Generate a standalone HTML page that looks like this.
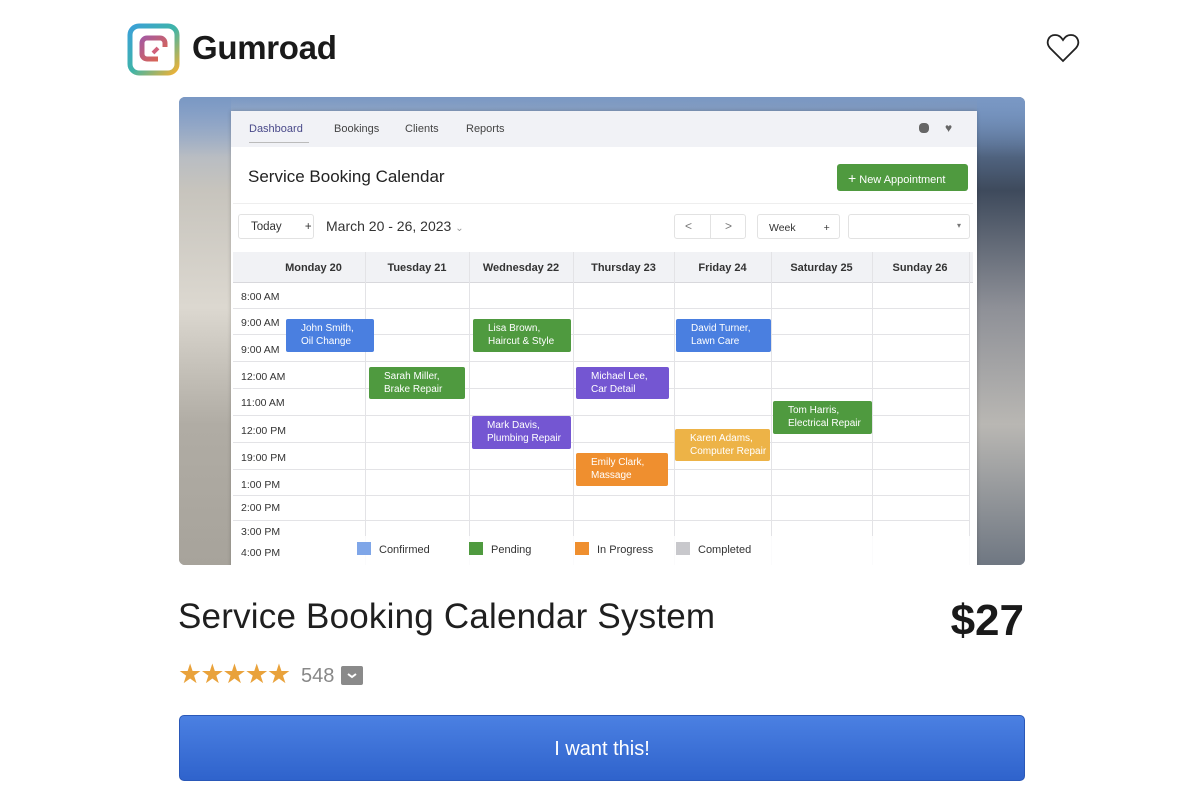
<!DOCTYPE html>
<html><head><meta charset="utf-8"><style>
*{margin:0;padding:0;box-sizing:border-box}
body{width:1200px;height:800px;background:#fff;font-family:"Liberation Sans",sans-serif;position:relative;overflow:hidden}
.abs{position:absolute}
.hero{left:179px;top:97px;width:846px;height:468px;border-radius:6px;overflow:hidden;
background:linear-gradient(90deg,#8d8f93 0%,#c5c2bd 3%,#d6d3cd 6%,#7f8a9a 100%);}
.hero .bgt{left:0;top:0;width:846px;height:60px;background:linear-gradient(180deg,#7a98c4,rgba(160,170,190,0))}
.hero .bgr{left:798px;top:0;width:48px;height:468px;background:linear-gradient(180deg,#6f8fbd 0%,#3e4a5c 20%,#8e9097 45%,#b9b7b3 70%,#6f7782 100%)}
.hero .bgl{left:0;top:0;width:52px;height:468px;background:linear-gradient(180deg,#9fb0cc 0%,#c7c4bd 20%,#dcd8d0 45%,#b0aca4 70%,#a7a39b 100%)}
.app{left:52px;top:14px;width:746px;height:460px;background:#fff;box-shadow:0 0 4px rgba(0,0,0,.2)}
.nav{left:0;top:0;width:746px;height:36px;background:#f1f2f6;font-size:11px;color:#444}
.nav span{position:absolute;top:12px}
.t{font-size:12px;color:#333}
.ev{position:absolute;color:#fff;font-size:10px;line-height:12.5px;padding:4px 0 0 15px;border-radius:2px}
.hl{position:absolute;left:2px;width:736px;height:1px;background:#e3e3e6}
.vl{position:absolute;top:141px;width:1px;height:320px;background:#e3e3e6}
.tm{position:absolute;left:10px;font-size:10.5px;color:#333}
.dh{position:absolute;top:151px;font-size:11px;font-weight:bold;color:#333;text-align:center}
.lg{position:absolute;top:431px;font-size:11px;color:#333}
.lg i{display:inline-block;width:14px;height:13px;vertical-align:-2px;margin-right:8px}
</style></head><body>
<svg class="abs" style="left:127px;top:23px" width="53" height="53" viewBox="0 0 53 53">
<defs><linearGradient id="g1" x1="0" y1="0" x2="1" y2="1"><stop offset="0" stop-color="#3aa0d8"/><stop offset=".5" stop-color="#3fb4a8"/><stop offset="1" stop-color="#f2b233"/></linearGradient>
<linearGradient id="g2" x1="0" y1="0" x2="1" y2="1"><stop offset="0" stop-color="#a55aa0"/><stop offset="1" stop-color="#e0664a"/></linearGradient></defs>
<rect x="3" y="3" width="47" height="47" rx="9" fill="none" stroke="url(#g1)" stroke-width="5"/>
<path d="M31 36 H20 a5 5 0 0 1 -5 -5 V20 a5 5 0 0 1 5 -5 H33 a5 5 0 0 1 5 5 V24" fill="none" stroke="url(#g2)" stroke-width="5"/>
<path d="M26 30 l5 -5" stroke="#d0607a" stroke-width="4"/>
</svg>
<div class="abs" style="left:192px;top:29px;font-size:33px;font-weight:bold;color:#1a1a1a;letter-spacing:-.3px">Gumroad</div>
<svg class="abs" style="left:1046px;top:33px" width="34" height="30" viewBox="0 0 34 30"><path d="M17 28 L4 15 C-1 9 3 2 9 2 C13 2 15 4 17 7 C19 4 21 2 25 2 C31 2 35 9 30 15 Z" fill="none" stroke="#222" stroke-width="1.8"/></svg>

<div class="abs hero">
<div class="abs bgl"></div><div class="abs bgr"></div><div class="abs bgt"></div>
<div class="abs app">
 <div class="abs nav"><span style="left:18px;color:#4a4a8a">Dashboard</span><span style="left:103px">Bookings</span><span style="left:174px">Clients</span><span style="left:235px">Reports</span>
 <div class="abs" style="left:18px;top:31px;width:60px;height:1px;background:#bbb"></div>
 <div class="abs" style="left:688px;top:12px;width:10px;height:10px;border-radius:4px;background:#666"></div>
 <div class="abs" style="left:714px;top:10px;font-size:12px;color:#666">♥</div></div>
 <div class="abs" style="left:17px;top:56px;font-size:17px;color:#222">Service Booking Calendar</div>
 <div class="abs" style="left:2px;top:92px;width:740px;height:1px;background:#eee"></div>
 <div class="abs" style="left:606px;top:53px;width:131px;height:27px;background:#4f9a3f;border-radius:3px;color:#fff;font-size:11px;padding:6px 0 0 11px"><b style="font-size:14px;font-weight:normal">+</b> New Appointment</div>
 <div class="abs t" style="left:7px;top:103px;width:76px;height:25px;border:1px solid #e2e2e2;border-radius:3px;padding:6px 0 0 12px;font-size:11.5px">Today <span style="margin-left:20px">+</span></div>
 <div class="abs" style="left:95px;top:107px;font-size:14px;color:#333">March 20 - 26, 2023 <span style="font-size:10px;color:#999">⌄</span></div>
 <div class="abs t" style="left:443px;top:103px;width:72px;height:25px;border:1px solid #e2e2e2;border-radius:3px"><span class="abs" style="left:10px;top:4px;color:#777">&lt;</span><span class="abs" style="left:35px;top:0;width:1px;height:23px;background:#e2e2e2"></span><span class="abs" style="left:50px;top:4px;color:#777">&gt;</span></div>
 <div class="abs t" style="left:526px;top:103px;width:83px;height:25px;border:1px solid #e2e2e2;border-radius:3px;padding:7px 0 0 11px;font-size:10.5px">Week <span style="margin-left:25px">+</span></div>
 <div class="abs" style="left:617px;top:103px;width:122px;height:25px;border:1px solid #e2e2e2;border-radius:3px"><span class="abs" style="right:8px;top:6px;font-size:8px;color:#777">▾</span></div>
 <div class="abs" style="left:2px;top:141px;width:740px;height:31px;background:#f1f2f5;border-bottom:1px solid #d8d8dc"></div>
 <div class="dh" style="left:31px;width:103px">Monday 20</div>
 <div class="dh" style="left:134px;width:104px">Tuesday 21</div>
 <div class="dh" style="left:238px;width:104px">Wednesday 22</div>
 <div class="dh" style="left:342px;width:101px">Thursday 23</div>
 <div class="dh" style="left:443px;width:97px">Friday 24</div>
 <div class="dh" style="left:540px;width:101px">Saturday 25</div>
 <div class="dh" style="left:641px;width:96px">Sunday 26</div>
 <div class="hl" style="top:197px"></div><div class="hl" style="top:223px"></div><div class="hl" style="top:250px"></div><div class="hl" style="top:277px"></div><div class="hl" style="top:304px"></div><div class="hl" style="top:331px"></div><div class="hl" style="top:358px"></div><div class="hl" style="top:384px"></div><div class="hl" style="top:409px"></div>
 <div class="vl" style="left:134px"></div><div class="vl" style="left:238px"></div><div class="vl" style="left:342px"></div><div class="vl" style="left:443px"></div><div class="vl" style="left:540px"></div><div class="vl" style="left:641px"></div><div class="vl" style="left:738px"></div>
 <div class="tm" style="top:180px">8:00 AM</div><div class="tm" style="top:206px">9:00 AM</div><div class="tm" style="top:233px">9:00 AM</div><div class="tm" style="top:260px">12:00 AM</div><div class="tm" style="top:286px">11:00 AM</div><div class="tm" style="top:314px">12:00 PM</div><div class="tm" style="top:341px">19:00 PM</div><div class="tm" style="top:368px">1:00 PM</div><div class="tm" style="top:391px">2:00 PM</div><div class="tm" style="top:415px">3:00 PM</div>
 <div class="ev" style="left:55px;top:208px;width:88px;height:33px;background:#4a7fe0">John Smith,<br>Oil Change</div>
 <div class="ev" style="left:242px;top:208px;width:98px;height:33px;background:#4f9a3f">Lisa Brown,<br>Haircut &amp; Style</div>
 <div class="ev" style="left:445px;top:208px;width:95px;height:33px;background:#4a7fe0">David Turner,<br>Lawn Care</div>
 <div class="ev" style="left:138px;top:256px;width:96px;height:32px;background:#4f9a3f">Sarah Miller,<br>Brake Repair</div>
 <div class="ev" style="left:345px;top:256px;width:93px;height:32px;background:#7456d2">Michael Lee,<br>Car Detail</div>
 <div class="ev" style="left:241px;top:305px;width:99px;height:33px;background:#7456d2">Mark Davis,<br>Plumbing Repair</div>
 <div class="ev" style="left:542px;top:290px;width:99px;height:33px;background:#4f9a3f">Tom Harris,<br>Electrical Repair</div>
 <div class="ev" style="left:444px;top:318px;width:95px;height:32px;background:#edb347">Karen Adams,<br>Computer Repair</div>
 <div class="ev" style="left:345px;top:342px;width:92px;height:33px;background:#ef8f2f">Emily Clark,<br>Massage</div>
 <div class="abs" style="left:2px;top:425px;width:738px;height:35px;background:rgba(255,255,255,.85)"></div>
 <div class="tm" style="top:436px">4:00 PM</div>
 <div class="lg" style="left:126px"><i style="background:#7fa6e8"></i>Confirmed</div>
 <div class="lg" style="left:238px"><i style="background:#4f9a3f"></i>Pending</div>
 <div class="lg" style="left:344px"><i style="background:#ef8f2f"></i>In Progress</div>
 <div class="lg" style="left:445px"><i style="background:#c8c8cc"></i>Completed</div>
</div>
</div>

<div class="abs" style="left:178px;top:597px;font-size:35px;color:#1f1f1f;letter-spacing:.2px">Service Booking Calendar System</div>
<div class="abs" style="right:176px;top:596px;font-size:44px;font-weight:bold;color:#1a1a1a">$27</div>
<div class="abs" style="left:178px;top:659px;font-size:27px;color:#e9a23b;letter-spacing:-2px">★★★★★</div>
<div class="abs" style="left:301px;top:665px;font-size:20px;color:#888">548</div>
<div class="abs" style="left:341px;top:666px;width:22px;height:19px;background:#8a8a8a;border-radius:2px"><svg width="22" height="19"><path d="M7 8 L11 11 L15 8" fill="none" stroke="#fff" stroke-width="2"/></svg></div>
<div class="abs" style="left:179px;top:715px;width:846px;height:66px;border-radius:5px;background:linear-gradient(180deg,#4b80e2,#2f63cc);border:1px solid #2a58b8;color:#fff;font-size:20px;text-align:center;line-height:66px">I want this!</div>
</body></html>
